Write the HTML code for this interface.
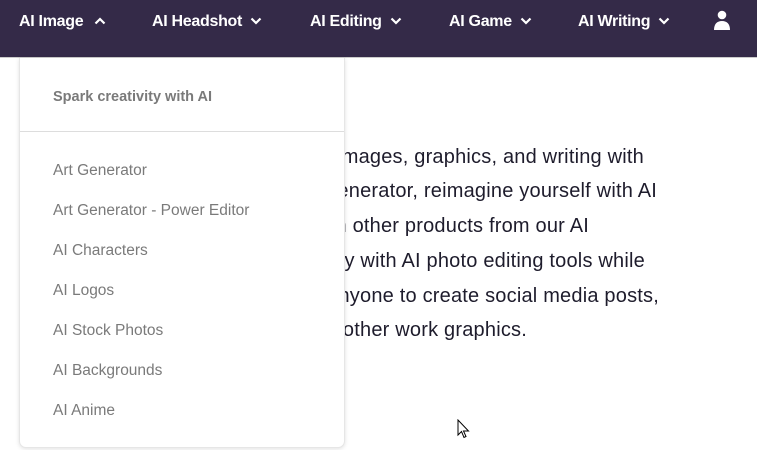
<!DOCTYPE html>
<html><head><style>
body{margin:0;width:757px;height:450px;overflow:hidden;background:#fff;font-family:"Liberation Sans",sans-serif;position:relative}
.nav{position:absolute;left:0;top:0;width:757px;height:57px;background:#342a48;border-bottom:1px solid #ccc}
.ni{position:absolute;top:12px;color:#fff;font-weight:bold;font-size:16px;letter-spacing:-0.3px;line-height:20px;white-space:nowrap}
.ni svg{margin-left:8px;vertical-align:1px}
.txt{position:absolute;color:#1e1c2c;font-size:20px;letter-spacing:0.2px;white-space:nowrap;line-height:22px;text-align:right}
.dd{position:absolute;left:19px;top:58px;width:324px;height:389px;background:#fff;border:1px solid #e6e6e6;border-top:none;border-radius:0 0 7px 7px;box-shadow:0 1px 4px rgba(0,0,0,.12)}
.hd{position:absolute;left:33px;top:31px;font-size:14.5px;font-weight:bold;color:#7a7a7a}
.hr{position:absolute;left:0;right:0;top:73px;border-top:1px solid #ddd}
.it{position:absolute;left:33px;font-size:15.5px;color:#7a7a7a}
</style></head><body>
<div class="txt" style="right:113px;top:146px">images, graphics, and writing with</div>
<div class="txt" style="right:100px;top:180px">generator, reimagine yourself with AI</div>
<div class="txt" style="right:168px;top:215px">with other products from our AI</div>
<div class="txt" style="right:112px;top:250px">ativity with AI photo editing tools while</div>
<div class="txt" style="right:98px;top:285px">anyone to create social media posts,</div>
<div class="txt" style="right:230px;top:319px">and other work graphics.</div>
<div class="nav">
<div class="ni" style="left:19px">AI Image<svg width="12" height="8" viewBox="0 0 12 8" style="margin-left:11px"><path d="M1.5 6.5L6 2l4.5 4.5" stroke="#fff" stroke-width="2.2" fill="none"/></svg></div>
<div class="ni" style="left:152px">AI Headshot<svg width="12" height="8" viewBox="0 0 12 8"><path d="M1.5 1.5L6 6l4.5-4.5" stroke="#fff" stroke-width="2.2" fill="none"/></svg></div>
<div class="ni" style="left:310px">AI Editing<svg width="12" height="8" viewBox="0 0 12 8"><path d="M1.5 1.5L6 6l4.5-4.5" stroke="#fff" stroke-width="2.2" fill="none"/></svg></div>
<div class="ni" style="left:449px">AI Game<svg width="12" height="8" viewBox="0 0 12 8"><path d="M1.5 1.5L6 6l4.5-4.5" stroke="#fff" stroke-width="2.2" fill="none"/></svg></div>
<div class="ni" style="left:578px">AI Writing<svg width="12" height="8" viewBox="0 0 12 8"><path d="M1.5 1.5L6 6l4.5-4.5" stroke="#fff" stroke-width="2.2" fill="none"/></svg></div>
<svg style="position:absolute;left:713px;top:10px" width="18" height="21" viewBox="0 0 18 21"><circle cx="9" cy="5" r="4.3" fill="#fff"/><path d="M1 20c0-6 3-9 8-9s8 3 8 9z" fill="#fff"/></svg>
</div>
<div class="dd">
<div class="hd">Spark creativity with AI</div>
<div class="hr"></div>
<div class="it" style="top:104px">Art Generator</div>
<div class="it" style="top:144px">Art Generator - Power Editor</div>
<div class="it" style="top:184px">AI Characters</div>
<div class="it" style="top:224px">AI Logos</div>
<div class="it" style="top:264px">AI Stock Photos</div>
<div class="it" style="top:304px">AI Backgrounds</div>
<div class="it" style="top:344px">AI Anime</div>
</div>
<svg style="position:absolute;left:457px;top:419px" width="13" height="20" viewBox="0 0 13 20"><path d="M1 1v15l3.5-3.5 2.5 6 2-1-2.5-5.5h5z" fill="#fff" stroke="#000" stroke-width="1"/></svg>
</body></html>
